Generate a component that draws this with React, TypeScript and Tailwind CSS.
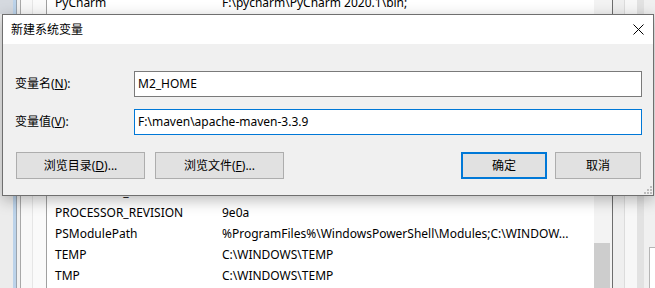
import React from "react";

const rows: [string, string][] = [
  ["PyCharm", "F:\\pycharm\\PyCharm 2020.1\\bin;"],
  ["NUMBER_OF_PROCESSORS", "8"],
  ["OS", "Windows_NT"],
  ["Path", "C:\\WINDOWS\\system32;C:\\WINDOWS;"],
  ["PATHEXT", ".COM;.EXE;.BAT;.CMD;.VBS;.VBE;.JS"],
  ["PROCESSOR_ARCHITECTURE", "AMD64"],
  ["PROCESSOR_IDENTIFIER", "Intel64 Family 6 Model 158"],
  ["JAVA_HOME", "C:\\Program Files\\Java\\jdk1.8.0"],
  ["CLASSPATH", ".;%JAVA_HOME%\\lib"],
  ["PROCESSOR_LEVEL", "6"],
  ["PROCESSOR_REVISION", "9e0a"],
  ["PSModulePath", "%ProgramFiles%\\WindowsPowerShell\\Modules;C:\\WINDOW..."],
  ["TEMP", "C:\\WINDOWS\\TEMP"],
  ["TMP", "C:\\WINDOWS\\TEMP"],
];

const font = {
  fontFamily: "'Noto Sans', 'Noto Sans CJK SC', sans-serif",
};

export default function App() {
  return (
    <div
      className="relative w-[655px] h-[288px] overflow-hidden bg-white text-[12px] text-black"
      style={font}
    >
      {/* background window */}
      <div className="flex h-full">
        {/* left frame */}
        <div className="flex h-full w-[46px]">
          <div className="flex w-[13px] flex-col bg-[#ececec]">
            <div className="h-[14px] bg-[#d5d9df]" />
          </div>
          <div className="w-[4px] bg-[#bcd3ea] border-r border-[#9aa4ae]" />
          <div className="w-[4px] bg-[#f0f0f0] border-r border-[#a8a8a8]" />
          <div className="w-[12px] bg-[#f8f8f8] border-r border-[#e6e6e6]" />
          <div className="flex-1 bg-[#fafafa]" />
        </div>
        {/* list */}
        <div className="flex-1 border-l border-[#a0a0a0] bg-white pl-[8px]">
          <div className="-mt-[8px] flex flex-col">
            {rows.map(([n, v]) => (
              <div key={n} className="flex h-[21px] items-center whitespace-nowrap leading-none">
                <span className="w-[167px] shrink-0">{n}</span>
                <span>{v}</span>
              </div>
            ))}
          </div>
        </div>
        {/* scrollbar */}
        <div className="flex w-[18px] flex-col justify-end bg-[#f3f3f3]">
          <div className="h-[45px] w-[16px] bg-[#cdcdcd]" />
        </div>
        {/* right frame */}
        <div className="flex h-full w-[43px] border-l border-[#6d6d6d]">
          <div className="w-[12px] bg-[#efefef] border-r border-[#dcdcdc]" />
          <div className="w-[12px] bg-[#f7f7f7]" />
          <div className="w-[7px] bg-[#e2e2e2]" />
          <div className="flex-1 bg-[#f0f0f0] pl-[5px] pt-[247px]">
            <div className="h-full border-l border-t border-[#b5b5b5] bg-white" />
          </div>
        </div>
      </div>

      {/* dialog */}
      <div className="absolute left-[2px] top-[14px] flex h-[182px] w-[652px] flex-col border border-[#6f6f6f] bg-[#f0f0f0] shadow-[0_4px_14px_rgba(0,0,0,0.28)]">
        <div className="flex h-[29px] items-center justify-between bg-white pl-[8px]">
          <span className="leading-none">新建系统变量</span>
          <svg width="11" height="11" viewBox="0 0 11 11" className="mr-[9px]">
            <path d="M0.5 0.5L10.5 10.5M10.5 0.5L0.5 10.5" stroke="#000" strokeWidth="1" />
          </svg>
        </div>
        <div className="relative flex flex-1 flex-col pl-[12px] pr-[11px] pt-[27px]">
          <div className="flex h-[26px] items-center">
            <span className="w-[119px] leading-none">
              变量名(<u>N</u>):
            </span>
            <div className="flex h-[26px] flex-1 items-center border border-[#7a7a7a] bg-white pl-[3px] leading-none">
              M2_HOME
            </div>
          </div>
          <div className="mt-[12px] flex h-[26px] items-center">
            <span className="w-[119px] leading-none">
              变量值(<u>V</u>):
            </span>
            <div className="flex h-[26px] flex-1 items-center border border-[#0078d7] bg-white pl-[3px] leading-none">
              F:\maven\apache-maven-3.3.9
            </div>
          </div>
          <div className="mt-[17px] flex h-[27px] items-stretch pl-[1px] pr-[1px]">
            <button className="flex w-[129px] items-center justify-center border border-[#adadad] bg-[#e1e1e1] leading-none">
              浏览目录(<u>D</u>)...
            </button>
            <button className="ml-[10px] flex w-[129px] items-center justify-center border border-[#adadad] bg-[#e1e1e1] leading-none">
              浏览文件(<u>F</u>)...
            </button>
            <div className="flex-1" />
            <button className="flex w-[86px] items-center justify-center border-2 border-[#0078d7] bg-[#e1e1e1] leading-none">
              确定
            </button>
            <button className="ml-[8px] flex w-[86px] items-center justify-center border border-[#adadad] bg-[#e1e1e1] leading-none">
              取消
            </button>
          </div>
          <svg
            width="9"
            height="9"
            viewBox="0 0 9 9"
            className="absolute bottom-[1px] right-[1px]"
          >
            <rect x="7" y="1" width="2" height="2" fill="#bdbdbd" />
            <rect x="4" y="4" width="2" height="2" fill="#bdbdbd" />
            <rect x="7" y="4" width="2" height="2" fill="#bdbdbd" />
            <rect x="1" y="7" width="2" height="2" fill="#bdbdbd" />
            <rect x="4" y="7" width="2" height="2" fill="#bdbdbd" />
            <rect x="7" y="7" width="2" height="2" fill="#bdbdbd" />
          </svg>
        </div>
      </div>
    </div>
  );
}
